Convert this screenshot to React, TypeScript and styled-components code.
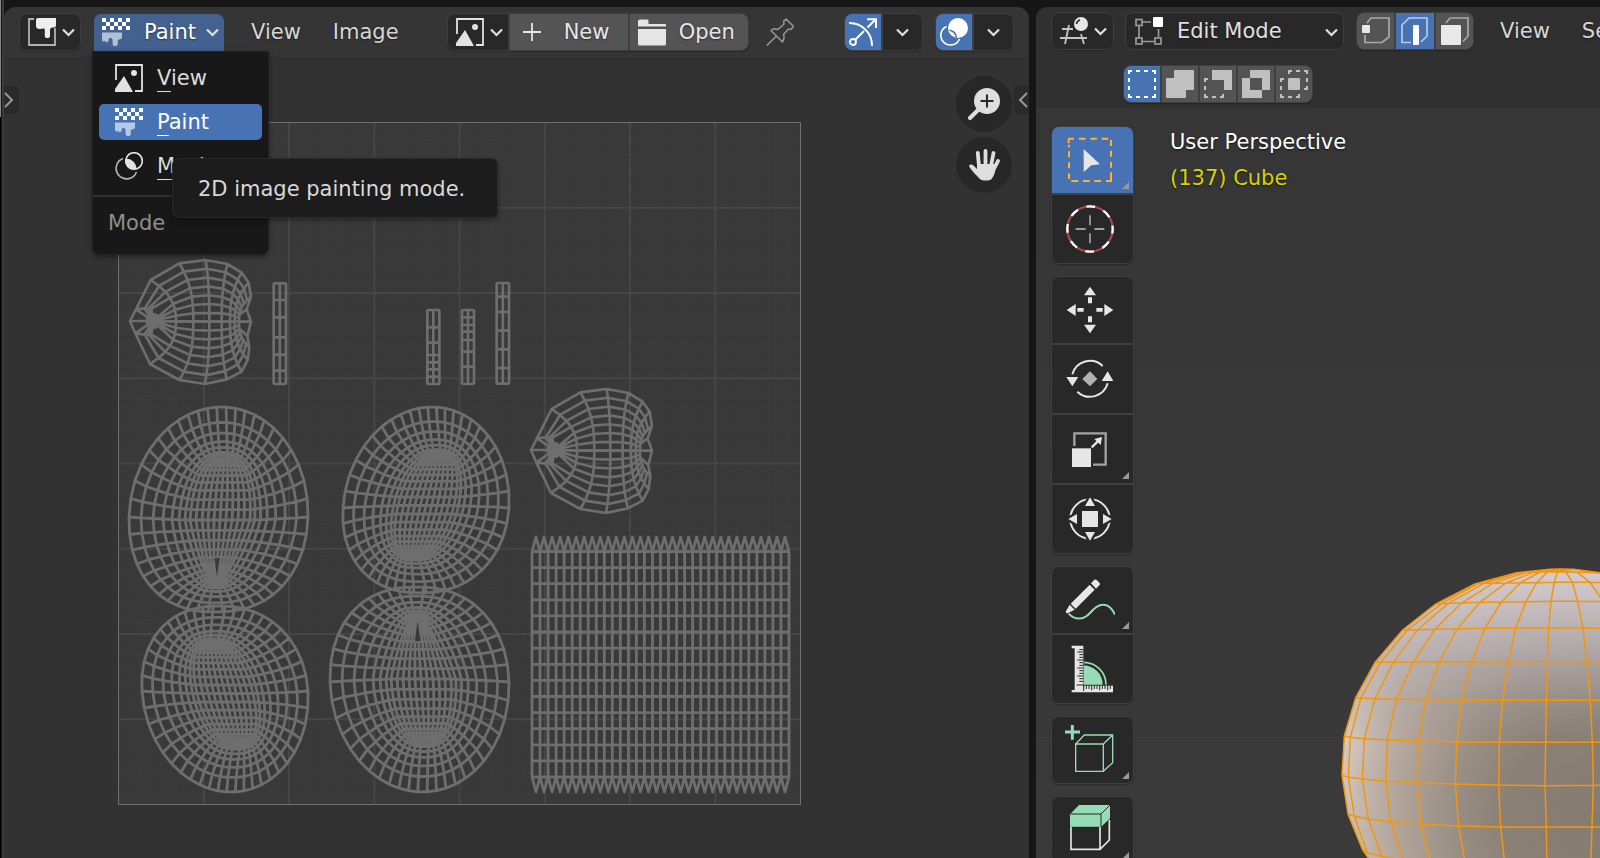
import React from 'react';
import styled, { createGlobalStyle, css } from 'styled-components';

const GlobalStyle = createGlobalStyle`
  *, *::before, *::after { box-sizing: border-box; }
  body { margin: 0; background: #161616; overflow: hidden; }
  body, button, select { font-family: 'DejaVu Sans', sans-serif; font-size: 21px; line-height: 26px; }
  button, select { margin: 0; padding: 0; border: 0; color: inherit; background: none; }
  svg { display: block; flex: none; }
`;

const MID = '#b2b2b2';
const BLUE = '#4772b3';

const Screen = styled.div`
  display: grid;
  grid-template-columns: minmax(0, 1025fr) minmax(0, 564fr);
  column-gap: 7px;
  height: 100vh;
  padding: 7px 0 0 4px;
  color: #e0e0e0;
  background:
    linear-gradient(#85898c 0 117px, #000 117px) 0 0 / 1px 100% no-repeat,
    linear-gradient(#3a3a3a, #3a3a3a) 2px 0 / 2px 100% no-repeat,
    #161616;
`;

const Area = styled.section<{ $side: 'left' | 'right' }>`
  display: flex;
  flex-direction: column;
  min-width: 0;
  min-height: 0;
  overflow: hidden;
  border-radius: ${p => (p.$side === 'left' ? '12px 12px 0 0' : '12px 0 0 0')};
  background: ${p => (p.$side === 'left' ? '#323232' : '#383838')};
`;

const Header = styled.header`
  display: flex;
  align-items: flex-start;
  height: 50px;
  flex: none;
  padding: 6px 15px 0;
  background: #353535;
`;

const ViewHeader = styled.header`
  flex: none;
  padding: 5px 0 5px 15px;
  background: #303030;
`;

const HeaderRow = styled.div`
  display: flex;
  align-items: center;
  height: 38px;
  white-space: nowrap;
`;

const SelectRow = styled(HeaderRow)`
  margin-top: 15px;
  padding-left: 72px;
`;

const Group = styled.div<{ $before?: number; $push?: boolean }>`
  display: flex;
  gap: 2px;
  height: 38px;
  flex: none;
  margin-left: ${p => (p.$push ? 'auto' : `${p.$before ?? 0}px`)};
  border: 1px solid #3f3f3f;
  border-radius: 8px;
  background: #3f3f3f;
  box-shadow: 0 1px 1px rgba(0, 0, 0, 0.25);
  overflow: hidden;
`;

const tones = { dark: '#282828', grey: '#545454', blue: BLUE };

const Cell = styled.button<{ $tone?: keyof typeof tones; $w: number }>`
  display: flex;
  align-items: center;
  justify-content: center;
  width: ${p => p.$w}px;
  height: 36px;
  flex: none;
  color: #e6e6e6;
  background: ${p => tones[p.$tone ?? 'dark']};
`;

const LabelCell = styled(Cell)<{ $gap: number }>`
  justify-content: flex-start;
  gap: ${p => p.$gap}px;
  padding-left: 8px;
  text-shadow: 0 1px 2px rgba(0, 0, 0, 0.5);
`;

const ModeWrap = styled.div`
  position: relative;
  margin-left: 12px;
  padding: 1px;
`;

const ModeButton = styled.button`
  display: flex;
  align-items: center;
  width: 130px;
  height: 37px;
  padding: 0 5px 1px 8px;
  border-radius: 7px 7px 0 0;
  color: #fff;
  background: #446290;
  text-shadow: 0 1px 2px rgba(0, 0, 0, 0.5);
  span { flex: 1; padding-left: 14px; text-align: left; }
`;

const Menu = styled.div`
  position: absolute;
  z-index: 2;
  top: 38px;
  left: -1px;
  width: 177px;
  height: 204px;
  padding: 8px 6px 0;
  border: 1px solid #222;
  border-radius: 0 0 8px 8px;
  background: #181818;
  box-shadow: 0 2px 5px rgba(0, 0, 0, 0.4);
`;

const MenuItem = styled.button<{ $active?: boolean }>`
  display: flex;
  align-items: center;
  gap: 14px;
  width: 100%;
  height: 36px;
  margin-bottom: 8px;
  padding: 0 0 0 16px;
  border-radius: 5px;
  color: ${p => (p.$active ? '#fff' : '#dcdcdc')};
  background: ${p => (p.$active ? BLUE : 'transparent')};
  u { text-decoration-thickness: 1px; text-underline-offset: 6px; text-decoration-skip-ink: none; }
`;

const MenuTitle = styled.div`
  margin: 11px -6px 0;
  padding: 13px 15px 0;
  border-top: 2px solid #2f2f2f;
  color: #8f8f8f;
`;

const Tooltip = styled.div`
  position: absolute;
  z-index: 3;
  top: 145px;
  left: 79px;
  padding: 17px 32px 15px 25px;
  border: 1px solid #2a2a2a;
  border-radius: 7px;
  color: #d9d9d9;
  background: #1c1c1c;
  box-shadow: 0 2px 5px rgba(0, 0, 0, 0.4);
  white-space: nowrap;
`;

const MenuLinks = styled.nav`
  display: flex;
  gap: 32px;
  height: 38px;
  align-items: center;
  margin-left: 26px;
  flex: none;
`;

const MenuLink = styled.button`
  color: #d6d6d6;
  text-shadow: 0 1px 2px rgba(0, 0, 0, 0.5);
`;

const PinButton = styled.button`
  margin: 5px 0 0 17px;
`;

const ModeSelect = styled.div`
  position: relative;
  margin-left: 11px;
  flex: none;
  select {
    display: block;
    width: 219px;
    height: 38px;
    padding: 0 40px 0 51px;
    appearance: none;
    border: 1px solid #3f3f3f;
    border-radius: 8px;
    color: #e0e0e0;
    background: #282828;
    text-shadow: 0 1px 2px rgba(0, 0, 0, 0.5);
  }
  svg { position: absolute; pointer-events: none; }
  svg:first-of-type { left: 10px; top: 5px; }
  svg:last-of-type { right: 6px; top: 16px; }
`;

const UvCanvas = styled.div`
  position: relative;
  flex: 1;
  padding: 65px 228px 0 114px;
  > svg { width: 100%; height: auto; }
`;

const sideTab = css`
  position: absolute;
  top: 29px;
  display: flex;
  align-items: center;
  width: 15px;
  height: 28px;
  background: #2a2a2a;
`;

const LeftTab = styled.button`
  ${sideTab}
  left: 0;
  border-radius: 0 5px 5px 0;
`;

const RightTab = styled.button`
  ${sideTab}
  right: 0;
  justify-content: flex-end;
  padding-right: 1px;
  border-radius: 5px 0 0 5px;
`;

const NavButtons = styled.div`
  position: absolute;
  top: 19px;
  right: 17px;
  display: grid;
  gap: 5px;
`;

const RoundButton = styled.button`
  display: grid;
  place-items: center;
  width: 56px;
  height: 56px;
  border-radius: 50%;
  background: #272727;
`;

const Viewport = styled.div`
  position: relative;
  display: flex;
  gap: 36px;
  flex: 1;
  min-height: 0;
  overflow: hidden;
  padding: 18px 0 0 15px;
  background: linear-gradient(#363636, #3a3a3a);
`;

const Scene = styled.svg`
  position: absolute;
  right: 0;
  top: 442px;
`;

const GridLine = styled.i`
  position: absolute;
  left: 0;
  right: 0;
  top: 629px;
  height: 1px;
  background: #3e3e3e;
`;

const ToolColumn = styled.div`
  position: relative;
  display: flex;
  flex-direction: column;
  gap: 12px;
`;

const ToolGroup = styled.div`
  display: flex;
  flex-direction: column;
  gap: 2px;
  flex: none;
  width: 83px;
  border: 1px solid #404040;
  border-radius: 8px;
  background: #404040;
  box-shadow: 0 1px 2px rgba(0, 0, 0, 0.25);
  overflow: hidden;
`;

const ToolButton = styled.button<{ $active?: boolean; $more?: boolean }>`
  position: relative;
  display: grid;
  place-items: center;
  height: 68px;
  padding-right: 5px;
  background: ${p => (p.$active ? BLUE : '#282828')};
  &:first-child { height: 66px; }
  ${p => p.$more && css`
    &::after {
      content: '';
      position: absolute;
      right: 4px;
      bottom: 4px;
      width: 7px;
      height: 7px;
      background: #9a9a9a;
      clip-path: polygon(100% 0, 100% 100%, 0 100%);
    }
  `}
`;

const SceneInfo = styled.div`
  position: relative;
  margin-top: -2px;
  line-height: 36px;
  color: #fff;
  text-shadow: 0 1px 2px rgba(0, 0, 0, 0.7);
  white-space: nowrap;
`;

const ObjectName = styled.div`
  color: #d8d200;
`;

/* ---------- small icons, 28 x 28 ---------- */

const Icon = ({ children }: { children: React.ReactNode }) => (
  <svg width="28" height="28" viewBox="0 0 28 28" fill="none" aria-hidden="true">{children}</svg>
);

const Chevron = () => (
  <svg width="13" height="9" viewBox="0 0 13 9" fill="none" stroke="#e0e0e0" strokeWidth="2.200" aria-hidden="true">
    <path d="M1 1.500l5.500 5.500 5.500-5.500" />
  </svg>
);

const ImageEditorIcon = () => (
  <Icon>
    <path d="M6 1H1V27H27V10" stroke={MID} strokeWidth="1.800" />
    <path d="M8 2a2 2 0 0 1 2-2H28V7.500a2 2 0 0 1-2 2c-2.500 0-4 .2-4 2.500v5.500a2.600 2.600 0 0 1-5.200 0V12c0-1.800-1.300-1.700-3-1.300C11 11.500 8 11 8 8z" fill="#eee" />
  </Icon>
);

const PaintIcon = ({ drip }: { drip: string }) => (
  <Icon>
    <g fill="#fff">
      {[0, 1, 2].flatMap(r => [0, 1, 2, 3, 4, 5, 6].filter(c => (c + r) % 2 === 0).map(c => (
        <rect key={`${r}-${c}`} x={c * 4} y={r * 4} width="4" height="4" />
      )))}
    </g>
    <path d="M0 14.500H20V19c0 2-1.500 2.400-3 2.400-1.200 0-1.200 1-1.200 2v2a2.600 2.600 0 0 1-5.200 0V23c0-1.800-.6-3-2-3s-2 .6-2 2.400a1.800 1.800 0 0 1-3.600 0C2.800 24 0 24 0 21.500z" fill={drip} />
  </Icon>
);

const PictureIcon = () => (
  <Icon>
    <path d="M1 16V1H27V27H20" stroke="#e2e2e2" strokeWidth="1.800" />
    <path d="M0 28V25L9 12L18 28z" fill="#e2e2e2" />
    <circle cx="19" cy="9" r="3" fill="#e2e2e2" />
  </Icon>
);

const MaskIcon = () => (
  <Icon>
    <path d="M8 6.500A10.500 10.500 0 1 0 21.500 20" stroke={MID} strokeWidth="1.600" />
    <circle cx="19" cy="9" r="8.300" stroke="#e2e2e2" strokeWidth="1.600" />
    <path d="M10.700 6.500A10.500 10.500 0 0 1 21.500 17A8.500 8.500 0 0 1 10.700 6.500z" fill="#e2e2e2" />
  </Icon>
);

const PlusIcon = () => (
  <Icon><path d="M14 5V23M5 14H23" stroke="#e6e6e6" strokeWidth="1.800" /></Icon>
);

const FolderIcon = () => (
  <Icon>
    <path d="M0 8V3.500a2 2 0 0 1 2-2H9A1.500 1.500 0 0 1 10.500 3V6H27a1 1 0 0 1 1 1V8.500H0z" fill="#e6e6e6" />
    <path d="M0 11H28V26a1.500 1.500 0 0 1-1.500 1.500H1.500A1.500 1.500 0 0 1 0 26z" fill="#e6e6e6" />
  </Icon>
);

const PinIcon = () => (
  <Icon>
    <path d="M20 1L27.500 8.500L25 11.500L22.500 11L17.500 16.500C18.500 19 18 21.500 16.500 24L5 12.500C7 10.500 9.500 10.500 12 11.500L18 6L17.500 3.500zM10 18.500L.7 27.500" stroke="#949494" strokeWidth="1.600" strokeLinejoin="round" />
  </Icon>
);

const GizmoIcon = () => (
  <Icon>
    <path d="M0 5A22.500 22.500 0 0 1 23 28M6 22L15 13M18.500 9.500L26.500 1.500M18 1.200H27V10" stroke="#fff" strokeWidth="2" />
    <circle cx="4" cy="24" r="3" stroke="#fff" strokeWidth="1.800" />
  </Icon>
);

const OverlayIcon = () => (
  <Icon>
    <circle cx="18" cy="10" r="10" fill="#fff" />
    <path d="M9.500 12.200A8.500 8.500 0 0 1 16.500 19.500" stroke={BLUE} strokeWidth="1.600" />
    <path d="M6.500 8.500A9.700 9.700 0 1 0 19.500 21" stroke="#fff" strokeWidth="1.600" />
  </Icon>
);

const ViewportIcon = () => (
  <Icon>
    <path d="M0 21H27M2 12H13M9 8L5 27M21 17L24 27" stroke="#c4c4c4" strokeWidth="1.800" />
    <circle cx="21" cy="7" r="7" fill="#e6e6e6" />
    <path d="M16.500 7Q17 3.500 20 3" stroke="#282828" strokeWidth="1.600" />
  </Icon>
);

const EditModeIcon = () => (
  <Icon>
    <path d="M7.500 5H16M4 9V21M7.500 24.500H20M23.500 12V20" stroke="#999" strokeWidth="1.700" />
    <g stroke="#999" strokeWidth="1.700">
      <rect x="1" y="2.500" width="6" height="6" />
      <rect x="1" y="21" width="6" height="6" />
      <rect x="20" y="21" width="6" height="6" />
    </g>
    <rect x="18" y="0" width="10" height="10" rx="1" fill="#fff" />
  </Icon>
);

const VertexIcon = () => (
  <Icon>
    <path d="M5 6L9 1H27V20L20 25.500H3V18" stroke="#a8a8a8" strokeWidth="1.700" />
    <rect x="0" y="8" width="8" height="8" rx="1" fill="#e8e8e8" />
  </Icon>
);

const EdgeIcon = () => (
  <Icon>
    <path d="M10 25.500H1V8L8 1H26V19L20 25" stroke="#b9cbe8" strokeWidth="1.700" />
    <rect x="12" y="8" width="6" height="20" rx="1" fill="#fff" />
  </Icon>
);

const FaceIcon = () => (
  <Icon>
    <path d="M5 6L9 1H27V19L22 24.500" stroke="#a8a8a8" strokeWidth="1.700" />
    <rect x="0" y="8" width="20" height="20" rx="1" fill="#e8e8e8" />
  </Icon>
);

const SelectSet = () => (
  <Icon>
    <path d="M1 4V1H4M8 1H12M16 1H20M24 1H27V4M27 8V12M27 16V20M27 24V27H24M20 27H16M12 27H8M4 27H1V24M1 20V16M1 12V8" stroke="#fff" strokeWidth="2" />
  </Icon>
);
const SelectExtend = () => (
  <Icon><path d="M0 9a1 1 0 0 1 1-1H8V1a1 1 0 0 1 1-1H27a1 1 0 0 1 1 1V19a1 1 0 0 1-1 1H20V27a1 1 0 0 1-1 1H1a1 1 0 0 1-1-1z" fill="#c0c0c0" /></Icon>
);
const SelectSubtract = () => (
  <Icon>
    <path d="M8 0H27a1 1 0 0 1 1 1V20H20V10H8z" fill="#c0c0c0" />
    <path d="M4 9H1V12M1 16V20M1 24V27H4M8 27H12M16 27H19V24" stroke="#c0c0c0" strokeWidth="2" />
  </Icon>
);
const SelectInvert = () => (
  <Icon><path fillRule="evenodd" d="M0 8H8V0H28V20H20V28H0zM8 8V20H20V8z" fill="#c0c0c0" /></Icon>
);
const SelectIntersect = () => (
  <Icon>
    <rect x="8" y="8" width="12" height="12" rx="1" fill="#c0c0c0" />
    <path d="M9 4V1H12M16 1H20M24 1H27V4M27 8V12M27 16V19H24M4 9H1V12M1 16V20M1 24V27H4M8 27H12M16 27H19V24" stroke="#c0c0c0" strokeWidth="2" />
  </Icon>
);

const ZoomIcon = () => (
  <svg width="32" height="32" viewBox="0 0 32 32" fill="none" aria-hidden="true">
    <circle cx="19" cy="13" r="13" fill="#dedede" />
    <path d="M10 22L2 30" stroke="#dedede" strokeWidth="4" strokeLinecap="round" />
    <path d="M19 6.500V19.500M12.500 13H25.500" stroke="#272727" strokeWidth="2" />
  </svg>
);

const HandIcon = () => (
  <svg width="32" height="32" viewBox="0 0 32 32" fill="none" aria-hidden="true">
    <path d="M11 17L9.800 4M17.500 16V2M23 17L25.500 4M26.500 19L30 12" stroke="#dedede" strokeWidth="3.800" strokeLinecap="round" />
    <path d="M1 17C1.500 15.500 3.500 15 5.500 16.500L9 20V15H28C28 22 26 27 23.500 30C22 32 14 32 12 30C8 26 3 21 1 17z" fill="#dedede" />
  </svg>
);

/* ---------- tool icons, drawn at three units per pixel ---------- */

const ToolIcon = ({ cy, children }: { cy: number; children: React.ReactNode }) => (
  <svg width="50" height="50" viewBox={`75 ${cy - 75} 150 150`} fill="none" aria-hidden="true">{children}</svg>
);

const LIGHT = '#e6e6e6';
const GREEN = '#96dcb5';

const BoxSelectTool = () => (
  <ToolIcon cy={150}>
    <path d="M86 100V88a2 2 0 0 1 2-2H102M117 86H137M151 86H171M185 86H205M213 90V108M213 122V140M213 155V173M213 187V213H198M183 213H163M149 213H129M115 213H94M87 207V190M87 175V157M87 142V124M87 112V104" stroke="#ffb12e" strokeWidth="6" />
    <path d="M131 117L180 163L154 166L131 186z" fill={LIGHT} />
  </ToolIcon>
);

const CursorTool = () => (
  <ToolIcon cy={356}>
    <circle cx="150" cy="356" r="68" stroke="#a34747" strokeWidth="7" />
    <circle cx="150" cy="356" r="68" stroke="#fff" strokeWidth="7" strokeDasharray="26.700 26.700" strokeDashoffset="13" />
    <path d="M107 356H137M163 356H193M150 315V345M150 369V399" stroke="#c4c4c4" strokeWidth="4" />
  </ToolIcon>
);

const MoveTool = () => (
  <ToolIcon cy={600}>
    <path d="M150 530L168 556H132zM150 670L132 644H168zM80 600L107 582V618zM220 600L193 582V618zM144 562h12v18h-12zM144 619h12v18h-12zM112 594h19v11h-19zM169 594h19v11h-19z" fill={LIGHT} />
  </ToolIcon>
);

const RotateTool = () => (
  <ToolIcon cy={117}>
    <path d="M97 103A55 55 0 0 1 188 78M203 130A55 55 0 0 1 112 155" stroke={LIGHT} strokeWidth="6" />
    <path d="M79 111H115L97 139zM185 123H220L203 94z" fill={LIGHT} />
    <path d="M150 94L172 117L150 139L127 117z" fill={MID} />
  </ToolIcon>
);

const ScaleTool = () => (
  <ToolIcon cy={327}>
    <path d="M103 318V280H197V374H159" stroke="#a4a4a4" strokeWidth="7" />
    <rect x="96" y="325" width="57" height="56" fill={LIGHT} />
    <path d="M155 322L176 302" stroke={LIGHT} strokeWidth="7" />
    <path d="M186 291L182 315L163 297z" fill={LIGHT} />
  </ToolIcon>
);

const TransformTool = () => (
  <ToolIcon cy={537}>
    <circle cx="150" cy="537" r="59" stroke={LIGHT} strokeWidth="6" />
    <path d="M150 472L165 498H135zM150 602L135 576H165zM85 537L111 522V552zM215 537L189 522V552z" fill={LIGHT} stroke="#282828" strokeWidth="14" paintOrder="stroke" />
    <rect x="126" y="513" width="48" height="48" fill={LIGHT} />
  </ToolIcon>
);

const AnnotateTool = () => (
  <ToolIcon cy={119}>
    <path d="M86 160C105 180 130 180 150 158C175 128 205 120 225 163" stroke={GREEN} strokeWidth="6" />
    <path d="M149 73L164 88L107 145L92 130zM153 69L163 58Q167 56 171 60L179 68Q182 72 178 75L168 85zM89 133L104 148L83 159Q76 159 78 152z" fill={LIGHT} />
  </ToolIcon>
);

const MeasureTool = () => (
  <ToolIcon cy={328}>
    <path d="M131 317A58 58 0 0 1 188 375H131z" fill={GREEN} />
    <path d="M131 308A67 67 0 0 1 198 375" stroke={GREEN} strokeWidth="5" />
    <path d="M95 258H130V378H219V398H95V391H104V266H95z" fill={LIGHT} />
    <path d="M118 270H130M112 277H130M118 285H130M118 293H130M112 301H130M118 309H130M118 317H130M112 325H130M118 333H130M118 341H130M112 349H130M118 357H130M118 365H130M110 376H131V394M139 378V388M147 378V388M155 378V392M163 378V388M171 378V388M179 378V392M187 378V388M195 378V388M203 378V392M211 378V388" stroke="#222" strokeWidth="3" />
  </ToolIcon>
);

const AddCubeTool = () => (
  <ToolIcon cy={571}>
    <path d="M97 495V540M74 517H120" stroke={GREEN} strokeWidth="9" />
    <path d="M107 553H190V635H107zM107 553L133 526H218V609L190 635M190 553L218 526" stroke={GREEN} strokeWidth="4" />
  </ToolIcon>
);

const ExtrudeTool = () => (
  <ToolIcon cy={809}>
    <path d="M93 800V867H180L208 839V778M180 800V867" stroke={LIGHT} strokeWidth="5" />
    <path d="M90 762L118 733H210V774L184 799H90z" fill={GREEN} />
    <path d="M90 761H183V799M183 761L210 734" stroke="#282828" strokeWidth="3" />
  </ToolIcon>
);

/* ---------- UV layout ---------- */

type Pt = [number, number];
const line = (pts: Pt[], close = false) =>
  'M' + pts.map(([x, y]) => `${x.toFixed(1)} ${y.toFixed(1)}`).join('L') + (close ? 'Z' : '');

interface IslandShape {
  cx: number; cy: number; rx: number; up: number; down: number; lean: number;
  head: Pt; foot: Pt; core: number; taper: number; spokes: number; box: number;
}

const RING_X = [0, 12, 24, 34, 43, 50, 56, 61];
const RING_Y = [0, 16, 27, 36, 42, 47, 50, 53];

/* Rings shrink from the rim onto an elongated core, and a dense grid fills the core. */
function islandPath(s: IslandShape): string {
  const n = s.spokes;
  const rings = RING_X.map((rxStep, r) => {
    const tx = rxStep / 61;
    const ty = RING_Y[r] / 53;
    return Array.from({ length: n }, (_, i): Pt => {
      const u = (i / n) * Math.PI * 2;
      const a = u + 0.12 * Math.sin(2 * u);
      const sn = Math.sin(a);
      const cs = Math.cos(a);
      const pow = sn > 0 ? s.box : 1;
      const ox = s.cx + Math.sign(cs) * Math.pow(Math.abs(cs), pow) * s.rx - s.lean * sn;
      const oy = s.cy + (sn < 0 ? sn * s.up : Math.pow(sn, 0.95) * s.down);
      const k = (1 + sn) / 2;
      const half = s.core * (1 - (sn > 0 ? s.taper * sn : 0));
      const ix = s.head[0] + (s.foot[0] - s.head[0]) * k + Math.sign(cs) * Math.pow(Math.abs(cs), 0.7) * half;
      const iy = s.head[1] + (s.foot[1] - s.head[1]) * k;
      return [ox + (ix - ox) * tx, oy + (iy - oy) * ty];
    });
  });
  const spokes = Array.from({ length: n }, (_, i) => line(rings.map(r => r[i])));
  const core = rings[rings.length - 1];
  const quarter = Math.floor(n / 4);
  const pairs: [Pt, Pt][] = [];
  for (let j = -quarter; j <= quarter; j++) {
    pairs.push([core[(n / 2 - j + n) % n], core[(j + n) % n]]);
  }
  const rows = pairs.map(([l, r]) => line([l, r]));
  const columns = [1, 2, 3, 4, 5, 6, 7, 8, 9].map(c => line(pairs.map(([l, r]): Pt => [
    l[0] + (r[0] - l[0]) * c / 10, l[1] + (r[1] - l[1]) * c / 10,
  ])));
  return rings.map(r => line(r, true)).join('') + spokes.join('') + rows.join('') + columns.join('');
}

const tall = islandPath({ cx: 218.5, cy: 517, rx: 89.5, up: 110, down: 95, lean: 3, head: [224, 458], foot: [216, 582], core: 30, taper: 0.5, spokes: 46, box: 0.85 });
const round = islandPath({ cx: 426, cy: 508, rx: 83, up: 101, down: 85, lean: 6, head: [438, 455], foot: [414, 556], core: 28, taper: 0, spokes: 46, box: 0.88 });

/* Fan-shaped island: columns bow between rim points, rows start at the pole. */
const fan = (() => {
  const mid = 245;
  const cols: { t: Pt; m: number; b: Pt }[] = [
    { t: [122, 120], m: 198, b: [120, 372] },
    { t: [208, 70], m: 250, b: [208, 420] },
    { t: [287, 60], m: 298, b: [285, 432] },
    { t: [352, 72], m: 335, b: [350, 418] },
    { t: [395, 98], m: 360, b: [395, 395] },
    { t: [416, 128], m: 374, b: [413, 360] },
    { t: [423, 170], m: 387, b: [418, 322] },
  ];
  const steps = [-7, -6, -5, -4, -3, -2, -1, 0, 1, 2, 3, 4, 5, 6, 7];
  const at = (c: typeof cols[number], n: number): Pt => {
    const end = n < 0 ? c.t : c.b;
    const g = Math.abs(n) / 7;
    return [c.m + (end[0] - c.m) * Math.pow(g, 2.6), mid + (end[1] - mid) * g];
  };
  const pole: Pt = [130, 243];
  const knee = (n: number): Pt[] => {
    const x = { 4: 124, 5: 115, 6: 104 }[Math.abs(n)];
    return x ? [[x, n < 0 ? 206 : 283]] : [];
  };
  const rim: Pt[] = [[60, 243], [78, 208], ...cols.map(c => c.t), [410, 208], [423, 245], [412, 288],
    ...cols.map(c => c.b).reverse(), [76, 280]];
  return [
    line(rim, true),
    ...cols.map(c => line(steps.map(n => at(c, n)))),
    ...steps.slice(1, -1).map(n => line([pole, ...knee(n), ...cols.map(c => at(c, n))])),
    ...Array.from({ length: 16 }, (_, i) => {
      const a = (i / 16) * Math.PI * 2;
      return line([pole, [pole[0] + 24 * Math.cos(a), pole[1] + 24 * Math.sin(a)]]);
    }),
    line([[60, 243], pole, [423, 245]]),
    line([[78, 208], pole, [76, 280]]),
    line([[78, 208], [104, 205], [128, 208]]),
    line([[76, 280], [104, 284], [128, 282]]),
    line([[387, 225], [410, 208]]),
    line([[387, 265], [412, 288]]),
  ].join('');
})();

const strips = [
  { l: 491, r: 528, ys: [130, 180, 232, 292, 344, 392, 432] },
  { l: 952, r: 988, ys: [210, 262, 308, 345, 367, 388, 410, 432] },
  { l: 1056, r: 1092, ys: [210, 232, 255, 275, 300, 335, 380, 432] },
  { l: 1160, r: 1197, ys: [129, 170, 216, 272, 328, 384, 431] },
].map(({ l, r, ys }) => {
  const top = ys[0];
  const bottom = ys[ys.length - 1];
  const c = (l + r) / 2;
  return [l, c, r].map(x => line([[x, top], [x, bottom]])).join('') + ys.map(y => line([[l - 1, y], [r + 1, y]])).join('');
}).join('');

const sheet = (() => {
  const l = 532, w = 257 / 32, top = 551.5, h = 225.5 / 14;
  const parts: string[] = [];
  for (let i = 0; i <= 32; i++) parts.push(line([[l + i * w, top], [l + i * w, top + 14 * h]]));
  for (let j = 0; j <= 14; j++) parts.push(line([[l, top + j * h], [l + 32 * w, top + j * h]]));
  for (let i = 0; i < 32; i++) {
    const x = l + i * w;
    parts.push(line([[x, top], [x + w / 2, 537], [x + w, top]]));
    parts.push(line([[x, top + 14 * h], [x + w / 2, 792], [x + w, top + 14 * h]]));
  }
  return parts.join('');
})();

const gridLines = (count: number, skip: number) => {
  const step = 682 / count;
  let d = '';
  for (let i = 1; i < count; i++) {
    if (i % skip === 0 && skip > 1) continue;
    const p = Number((i * step).toFixed(1));
    d += `M${118.5 + p} 122.500V804.500M118.500 ${122.5 + p}H800.500`;
  }
  return d;
};

const UvLayout = () => (
  <svg viewBox="118 122 683 683" fill="none" role="img" aria-label="UV layout">
    <rect x="118.500" y="122.500" width="682" height="682" fill="#393939" />
    <path d={gridLines(64, 8)} stroke="#3c3c3c" />
    <path d={gridLines(8, 1)} stroke="#464646" strokeWidth="2" />
    <rect x="118.500" y="122.500" width="682" height="682" stroke="#707070" />
    <g stroke="#6e6e6e" strokeWidth="2.800" strokeLinejoin="round">
      <path d={tall} />
      <path d={round} />
      <path d={round} transform="matrix(1 0 0 -1 -201 1199)" />
      <path d={tall} transform="matrix(1 0 0 -1 201 1199)" />
      <path d={sheet} />
    </g>
    <g fill="#393939">
      <path d="M214.500 558H219.500L217 577z" />
      <path d="M415 641H420.500L417.500 621z" />
    </g>
    <g stroke="#6e6e6e" strokeWidth="8" strokeLinejoin="round">
      <path d={fan} transform="translate(110 240) scale(.33333)" />
      <path d={fan} transform="translate(511 369) scale(.33333)" />
      <path d={strips} transform="translate(110 240) scale(.33333)" />
    </g>
  </svg>
);

/* ---------- sphere wireframe: one array per parallel ---------- */

const parallels: Pt[][] = [
  [[620, 68], [625, 68], [635, 67], [650, 67], [670, 67], [690, 66], [712, 66], [742, 66], [768, 66], [800, 66], [880, 69]],
  [[495, 102], [505, 101], [522, 100], [548, 100], [588, 99], [632, 98], [680, 98], [733, 97], [787, 97], [840, 97], [890, 98]],
  [[378, 162], [395, 161], [415, 160], [455, 159], [510, 157], [574, 156], [648, 155], [723, 154], [803, 154], [880, 155]],
  [[278, 240], [292, 240], [323, 239], [375, 238], [442, 236], [525, 235], [617, 234], [716, 234], [819, 234], [922, 235]],
  [[195, 337], [212, 337], [250, 337], [310, 336], [388, 336], [485, 336], [595, 336], [712, 335], [830, 335], [950, 335]],
  [[137, 443], [153, 444], [195, 446], [260, 447], [347, 449], [455, 450], [578, 451], [709, 451], [841, 451], [970, 451]],
  [[103, 558], [121, 562], [163, 566], [232, 570], [325, 573], [440, 576], [568, 577], [707, 577], [847, 577], [980, 577]],
  [[96, 676], [115, 682], [157, 687], [228, 694], [322, 698], [436, 702], [566, 705], [705, 707], [850, 706], [985, 706]],
  [[114, 792], [133, 798], [175, 807], [242, 815], [333, 822], [446, 828], [572, 831], [709, 831], [846, 831], [980, 831]],
  [[158, 900], [172, 908], [215, 919], [278, 928], [362, 938], [467, 946], [585, 950], [711, 952], [842, 952], [960, 952]],
];
const meridians: Pt[][] = Array.from({ length: 10 }, (_, i) => [
  ...(i > 0 ? [[748, 61] as Pt] : []), ...parallels.map(p => p[i]),
]);
const silhouette = line([
  [748, 57], [720, 58], ...parallels.map(p => p[0]), [200, 960], [900, 960], [900, 72], [870, 68], [790, 58],
], true);

const Sphere = () => (
  <Scene width="290" height="308" viewBox="0 0 870 924" fill="none" role="img" aria-label="Cube">
    <defs>
      <radialGradient id="shade" gradientUnits="userSpaceOnUse" cx="860" cy="800" r="790">
        <stop offset="0" stopColor="#867b70" />
        <stop offset="0.350" stopColor="#8a8075" />
        <stop offset="0.550" stopColor="#9a8f85" />
        <stop offset="0.750" stopColor="#b0a499" />
        <stop offset="0.900" stopColor="#c3b7ae" />
        <stop offset="1" stopColor="#d6cac3" />
      </radialGradient>
      <linearGradient id="sky" gradientUnits="userSpaceOnUse" x1="0" y1="60" x2="0" y2="580">
        <stop offset="0" stopColor="#d4ccd1" />
        <stop offset="0.500" stopColor="#b3acaf" stopOpacity="0.650" />
        <stop offset="1" stopColor="#938b8c" stopOpacity="0" />
      </linearGradient>
    </defs>
    <path d={silhouette} fill="url(#shade)" />
    <path d={silhouette} fill="url(#sky)" />
    <path d={silhouette + parallels.map(p => line(p)).join('') + meridians.map(m => line(m)).join('')} stroke="#f2960f" strokeWidth="4.500" />
  </Scene>
);

const SideArrow = ({ d }: { d: string }) => (
  <svg width="10" height="16" viewBox="0 0 10 16" fill="none" stroke="#999" strokeWidth="2" aria-hidden="true"><path d={d} /></svg>
);

export default function App() {
  return (
    <>
      <GlobalStyle />
      <Screen>
        <Area $side="left">
          <Header>
            <Group>
              <LabelCell $w={60} $gap={6} aria-label="Editor type"><ImageEditorIcon /><Chevron /></LabelCell>
            </Group>
            <ModeWrap>
              <ModeButton aria-haspopup="menu" aria-expanded="true">
                <PaintIcon drip="#b0bfd8" /><span>Paint</span><Chevron />
              </ModeButton>
              <Menu role="menu">
                <MenuItem role="menuitem"><PictureIcon /><span><u>V</u>iew</span></MenuItem>
                <MenuItem role="menuitem" $active><PaintIcon drip="#b5c8e6" /><span><u>P</u>aint</span></MenuItem>
                <MenuItem role="menuitem"><MaskIcon /><span><u>M</u>ask</span></MenuItem>
                <MenuTitle>Mode</MenuTitle>
              </Menu>
              <Tooltip role="tooltip">2D image painting mode.</Tooltip>
            </ModeWrap>
            <MenuLinks>
              <MenuLink>View</MenuLink>
              <MenuLink>Image</MenuLink>
            </MenuLinks>
            <Group $before={48}>
              <LabelCell $w={60} $gap={6} aria-label="Browse image"><PictureIcon /><Chevron /></LabelCell>
              <LabelCell $tone="grey" $w={118} $gap={18}><PlusIcon />New</LabelCell>
              <LabelCell $tone="grey" $w={118} $gap={13}><FolderIcon />Open</LabelCell>
            </Group>
            <PinButton aria-label="Pin"><PinIcon /></PinButton>
            <Group $push>
              <Cell $tone="blue" $w={36} aria-label="Show gizmo"><GizmoIcon /></Cell>
              <Cell $w={39} aria-label="Gizmo options"><Chevron /></Cell>
            </Group>
            <Group $before={12}>
              <Cell $tone="blue" $w={36} aria-label="Show overlays"><OverlayIcon /></Cell>
              <Cell $w={39} aria-label="Overlay options"><Chevron /></Cell>
            </Group>
          </Header>
          <UvCanvas>
            <UvLayout />
            <LeftTab aria-label="Show toolbar"><SideArrow d="M1 1l7 7-7 7" /></LeftTab>
            <NavButtons>
              <RoundButton aria-label="Zoom"><ZoomIcon /></RoundButton>
              <RoundButton aria-label="Pan"><HandIcon /></RoundButton>
            </NavButtons>
            <RightTab aria-label="Show sidebar"><SideArrow d="M9 1L2 8l7 7" /></RightTab>
          </UvCanvas>
        </Area>

        <Area $side="right">
          <ViewHeader>
            <HeaderRow>
              <Group>
                <LabelCell $w={61} $gap={6} aria-label="Editor type"><ViewportIcon /><Chevron /></LabelCell>
              </Group>
              <ModeSelect>
                <select aria-label="Object mode" defaultValue="Edit Mode">
                  <option>Edit Mode</option>
                </select>
                <EditModeIcon />
                <Chevron />
              </ModeSelect>
              <Group $before={12}>
                <Cell $tone="grey" $w={37} aria-label="Vertex select"><VertexIcon /></Cell>
                <Cell $tone="blue" $w={38} aria-label="Edge select"><EdgeIcon /></Cell>
                <Cell $tone="grey" $w={37} aria-label="Face select"><FaceIcon /></Cell>
              </Group>
              <MenuLinks>
                <MenuLink>View</MenuLink>
                <MenuLink>Select</MenuLink>
              </MenuLinks>
            </HeaderRow>
            <SelectRow>
              <Group>
                <Cell $tone="blue" $w={36} aria-label="Set selection"><SelectSet /></Cell>
                <Cell $tone="grey" $w={36} aria-label="Extend selection"><SelectExtend /></Cell>
                <Cell $tone="grey" $w={36} aria-label="Subtract selection"><SelectSubtract /></Cell>
                <Cell $tone="grey" $w={36} aria-label="Invert selection"><SelectInvert /></Cell>
                <Cell $tone="grey" $w={36} aria-label="Intersect selection"><SelectIntersect /></Cell>
              </Group>
            </SelectRow>
          </ViewHeader>
          <Viewport>
            <GridLine />
            <Sphere />
            <ToolColumn>
              <ToolGroup>
                <ToolButton $active $more aria-label="Select box"><BoxSelectTool /></ToolButton>
                <ToolButton aria-label="Cursor"><CursorTool /></ToolButton>
              </ToolGroup>
              <ToolGroup>
                <ToolButton aria-label="Move"><MoveTool /></ToolButton>
                <ToolButton aria-label="Rotate"><RotateTool /></ToolButton>
                <ToolButton $more aria-label="Scale"><ScaleTool /></ToolButton>
                <ToolButton aria-label="Transform"><TransformTool /></ToolButton>
              </ToolGroup>
              <ToolGroup>
                <ToolButton $more aria-label="Annotate"><AnnotateTool /></ToolButton>
                <ToolButton aria-label="Measure"><MeasureTool /></ToolButton>
              </ToolGroup>
              <ToolGroup>
                <ToolButton $more aria-label="Add cube"><AddCubeTool /></ToolButton>
              </ToolGroup>
              <ToolGroup>
                <ToolButton $more aria-label="Extrude region"><ExtrudeTool /></ToolButton>
              </ToolGroup>
            </ToolColumn>
            <SceneInfo>
              <div>User Perspective</div>
              <ObjectName>(137) Cube</ObjectName>
            </SceneInfo>
          </Viewport>
        </Area>
      </Screen>
    </>
  );
}
